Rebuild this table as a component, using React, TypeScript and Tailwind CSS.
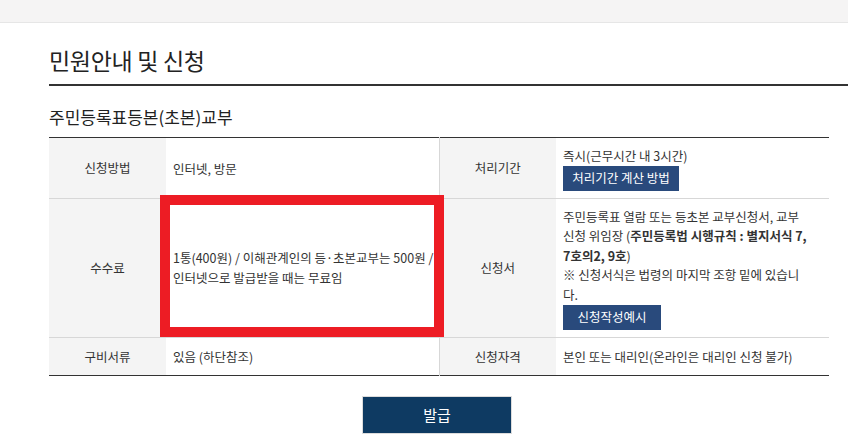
const font = { fontFamily: '"Noto Sans CJK KR", "Noto Sans", sans-serif' };

interface Row {
  label1: string;
  value1: React.ReactNode;
  label2: string;
  value2: React.ReactNode;
  pad: string;
}

function NavyButton({ children, width }: { children: React.ReactNode; width: string }) {
  return (
    <div className={`flex h-[25px] ${width} items-center justify-center bg-[#294a7c] text-[12.5px] text-white`}>
      {children}
    </div>
  );
}

const rows: Row[] = [
  {
    label1: '신청방법',
    value1: '인터넷, 방문',
    label2: '처리기간',
    value2: (
      <div>
        <div>즉시(근무시간 내 3시간)</div>
        <NavyButton width="w-[116px]">처리기간 계산 방법</NavyButton>
      </div>
    ),
    pad: 'pt-[8px] pb-[7px]',
  },
  {
    label1: '수수료',
    value1: (
      <div className="whitespace-nowrap">
        1통(400원) / 이해관계인의 등·초본교부는 500원 /
        <br />
        인터넷으로 발급받을 때는 무료임
      </div>
    ),
    label2: '신청서',
    value2: (
      <div className="whitespace-nowrap">
        <div>주민등록표 열람 또는 등초본 교부신청서, 교부</div>
        <div>
          신청 위임장 (<b className="font-bold">주민등록법 시행규칙 : 별지서식 7,</b>
        </div>
        <div>
          <b className="font-bold">7호의2, 9호</b>)
        </div>
        <div>※ 신청서식은 법령의 마지막 조항 밑에 있습니</div>
        <div>다.</div>
        <NavyButton width="w-[98px]">신청작성예시</NavyButton>
      </div>
    ),
    pad: 'pt-[8px] pb-[7px]',
  },
  {
    label1: '구비서류',
    value1: '있음 (하단참조)',
    label2: '신청자격',
    value2: '본인 또는 대리인(온라인은 대리인 신청 불가)',
    pad: 'py-[9px]',
  },
];

export default function App() {
  return (
    <div className="min-h-[444px] w-[848px] overflow-hidden bg-white text-[#333]" style={font}>
      <div className="h-[23px] border-b border-[#e6e6e6] bg-[#f5f4f4]" />
      <div className="pl-[49px]">
        <h1 className="mt-[22px] border-b-2 border-[#333] pb-[9px] text-[23px] leading-[30px] font-normal tracking-[-0.3px] text-[#222]">
          민원안내 및 신청
        </h1>
        <h2 className="mt-[19px] text-[17px] leading-[24px] font-normal text-[#222]">
          주민등록표등본(초본)교부
        </h2>
        <div className="relative mt-[8px] w-[780px]">
          <table className="w-[780px] table-fixed border-collapse border-t border-b border-[#333] text-[12.5px] leading-[19.6px]">
            <colgroup>
              <col className="w-[117px]" />
              <col className="w-[273px]" />
              <col className="w-[117px]" />
              <col className="w-[273px]" />
            </colgroup>
            <tbody>
              {rows.map((r, i) => (
                <tr key={i} className={i < rows.length - 1 ? 'border-b border-[#d7d7d7]' : ''}>
                  <th className="bg-[#f4f4f4] text-center font-normal">{r.label1}</th>
                  <td className={`px-[7px] align-middle ${r.pad}`}>{r.value1}</td>
                  <th className="border-l border-[#d7d7d7] bg-[#f4f4f4] text-center font-normal">
                    {r.label2}
                  </th>
                  <td className={`pr-[7px] pl-[7px] align-middle ${r.pad}`}>{r.value2}</td>
                </tr>
              ))}
            </tbody>
          </table>
          <div className="absolute top-[58px] left-[111px] h-[142px] w-[284px] border-[10px] border-[#ed1c24]" />
        </div>
        <div className="mt-[20px] flex w-[776px] justify-center">
          <button className="flex h-[38px] w-[150px] items-center justify-center border border-[#dcdcdc] bg-[#0e3a62] text-[15px] text-white">
            발급
          </button>
        </div>
      </div>
    </div>
  );
}
